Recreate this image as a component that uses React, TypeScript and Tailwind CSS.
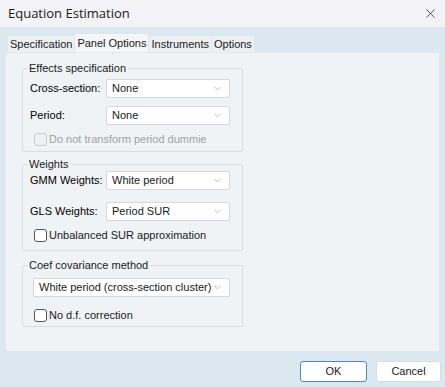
import React from 'react';
import { ChevronDown, X } from 'lucide-react';

const font = { fontFamily: '"Liberation Sans", Arial, sans-serif' };

const Select = ({ value, className = '' }: { value: string; className?: string }) => (
  <div
    className={`flex h-[19px] items-center justify-between rounded-[2px] border border-[#d4d8dc] bg-white pl-[5px] pr-[6px] text-[11px] text-[#1a1a1a] ${className}`}
  >
    <span className="whitespace-nowrap">{value}</span>
    <ChevronDown size={11} strokeWidth={1.2} className="text-[#888]" />
  </div>
);

const Check = ({ label, disabled = false }: { label: string; disabled?: boolean }) => (
  <div className={`flex h-[14px] items-center gap-[2px] text-[11px] ${disabled ? 'text-[#a0a0a0]' : 'text-[#1a1a1a]'}`}>
    <div
      className={`h-[13px] w-[13px] flex-none rounded-[3px] border ${disabled ? 'border-[#c8ccd0] bg-[#eef1f4]' : 'border-[#555] bg-white'}`}
    />
    <span className="overflow-hidden whitespace-nowrap">{label}</span>
  </div>
);

const Group = ({ title, children, className = '' }: { title: string; children: React.ReactNode; className?: string }) => (
  <div className={`relative w-[221px] flex-none rounded-[2px] border border-[#d9dde1] ${className}`}>
    <span className="absolute left-[4px] top-[-8px] whitespace-nowrap bg-[#eff3f6] px-[2px] text-[11px] leading-[14px] text-[#1a1a1a]">
      {title}
    </span>
    {children}
  </div>
);

export default function App() {
  const tabs = ['Specification', 'Panel Options', 'Instruments', 'Options'];
  return (
    <div className="flex h-[387px] w-[445px] flex-col bg-[#dce8ef]" style={font}>
      <div className="flex h-[27px] flex-none items-center justify-between bg-[#f3f2f6] pl-[8px] pr-[7px]">
        <span className="text-[13px] text-[#1a1a1a]" style={{ fontFamily: '"Open Sans", sans-serif' }}>
          Equation Estimation
        </span>
        <X size={15} strokeWidth={1.2} className="text-[#222]" />
      </div>

      <div className="flex h-[25px] flex-none items-end gap-[1px] pl-[8px] pt-[9px]">
        {tabs.map((t) => (
          <div
            key={t}
            className={`whitespace-nowrap px-[2px] text-[11px] leading-[16px] text-[#1a1a1a] ${
              t === 'Panel Options' ? 'h-[18px] bg-[#f4f6f8] pt-[1px]' : 'h-[16px] bg-[#ecf0f3]'
            }`}
          >
            {t}
          </div>
        ))}
      </div>

      <div className="mx-[5px] flex h-[300px] flex-none flex-col border border-[#e4e8eb] bg-[#eff3f6] pl-[16px] pt-[15px]">
        <Group title="Effects specification" className="h-[84px]">
          <div className="flex flex-col pl-[7px] pr-[12px] pt-[10px]">
            <div className="flex items-center">
              <span className="w-[76px] whitespace-nowrap text-[11px]">Cross-section:</span>
              <Select value="None" className="flex-1" />
            </div>
            <div className="mt-[8px] flex items-center">
              <span className="w-[76px] whitespace-nowrap text-[11px]">Period:</span>
              <Select value="None" className="flex-1" />
            </div>
            <div className="mt-[7px] w-[176px] pl-[4px]">
              <Check label="Do not transform period dummies" disabled />
            </div>
          </div>
        </Group>

        <Group title="Weights" className="mt-[12px] h-[87px]">
          <div className="flex flex-col pl-[7px] pr-[12px] pt-[6px]">
            <div className="flex items-center">
              <span className="w-[76px] whitespace-nowrap text-[11px]">GMM Weights:</span>
              <Select value="White period" className="flex-1" />
            </div>
            <div className="mt-[12px] flex items-center">
              <span className="w-[76px] whitespace-nowrap text-[11px]">GLS Weights:</span>
              <Select value="Period SUR" className="flex-1" />
            </div>
            <div className="mt-[7px] pl-[4px]">
              <Check label="Unbalanced SUR approximation" />
            </div>
          </div>
        </Group>

        <Group title="Coef covariance method" className="mt-[14px] h-[62px]">
          <div className="flex flex-col pl-[10px] pr-[12px] pt-[12px]">
            <Select value="White period (cross-section cluster)" />
            <div className="mt-[11px] pl-[1px]">
              <Check label="No d.f. correction" />
            </div>
          </div>
        </Group>
      </div>

      <div className="flex justify-end gap-[9px] pr-[4px] pt-[9px]">
        <button className="h-[21px] w-[67px] rounded-[3px] border border-[#4a8ac0] bg-white text-[11px] text-[#1a1a1a]">
          OK
        </button>
        <button className="h-[21px] w-[65px] rounded-[3px] border border-[#d8dce0] bg-white text-[11px] text-[#1a1a1a]">
          Cancel
        </button>
      </div>
    </div>
  );
}
